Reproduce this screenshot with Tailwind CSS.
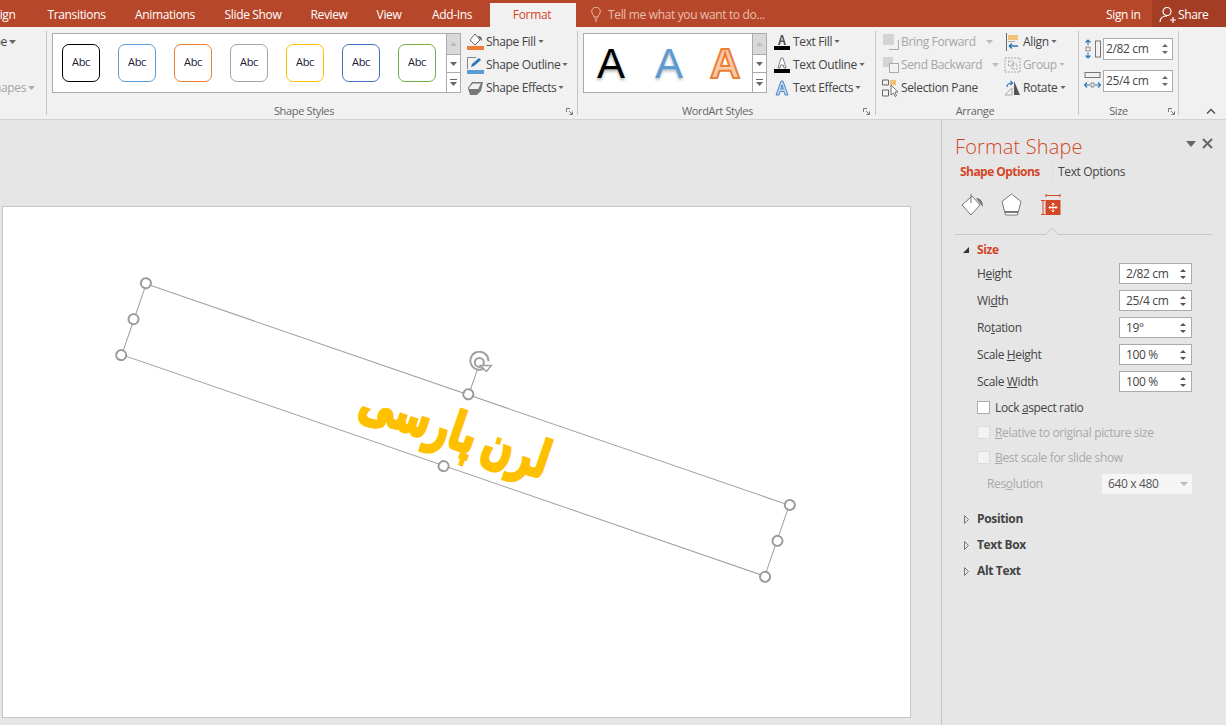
<!DOCTYPE html>
<html lang="en">
<head>
  <meta charset="UTF-8">
  <title>Format Shape</title>
  <script src="https://cdn.jsdelivr.net/npm/@tailwindcss/browser@4"></script>
</head>
<body class="h-screen overflow-hidden flex flex-col bg-[#e6e6e6] text-[12px] text-[#444] font-['Open_Sans',sans-serif] tracking-[-0.35px]">

  <!-- Tabs -->
  <div class="h-[27px] shrink-0 flex bg-[#b7472a] text-white">
    <div class="w-[71px] -ml-[38px] shrink-0 flex items-center justify-center pt-[2px]">Design</div>
    <div class="w-[87px] shrink-0 flex items-center justify-center pt-[2px]">Transitions</div>
    <div class="w-[90px] shrink-0 flex items-center justify-center pt-[2px]">Animations</div>
    <div class="w-[86px] shrink-0 flex items-center justify-center pt-[2px]">Slide Show</div>
    <div class="w-[66px] shrink-0 flex items-center justify-center pt-[2px]">Review</div>
    <div class="w-[54px] shrink-0 flex items-center justify-center pt-[2px]">View</div>
    <div class="w-[74px] shrink-0 flex items-center justify-center pr-[2px] pt-[2px]">Add-Ins</div>
    <div class="w-[86px] shrink-0 mt-[3px] flex items-center justify-center pr-[2px] bg-[#f1f1f1] text-[#d24726]">Format</div>
    <div class="ml-[15px] flex items-center gap-[7px] text-[#e9bfb2] pt-[2px]">
      <svg class="w-[10px] h-[15px]" viewBox="0 0 10 15" fill="none" stroke="#e9bfb2"><path d="M3 10C3 8 .7 7 .7 4.500a4.300 4.300 0 0 1 8.600 0C9.300 7 7 8 7 10z"/><path d="M3.500 12h3M4 14h2"/></svg>
      <span>Tell me what you want to do...</span>
    </div>
    <div class="ml-auto flex">
      <div class="w-[46px] flex items-center pt-[2px]">Sign in</div>
      <div class="w-[74px] bg-[#a33e24] flex items-center pl-[7px] gap-[1px] pt-[2px]">
        <svg class="w-[18px] h-[18px]" viewBox="0 0 18 18" fill="none" stroke="#fff" stroke-width="1.200"><circle cx="8" cy="5.500" r="4"/><path d="M1 16c0-4 3-6 7-6M11 14h6M14 11v6"/></svg>
        <span>Share</span>
      </div>
    </div>
  </div>

  <!-- Ribbon -->
  <div class="h-[93px] shrink-0 flex bg-[#f1f1f1] border-b border-[#d2d2d2]">

    <div class="w-[46px] shrink-0 overflow-hidden flex flex-col">
      <div class="h-[23px] mt-[3px] flex items-center justify-end pr-[30px] gap-[2px] whitespace-nowrap">
        <span>Edit Shape</span>
        <svg class="w-[7px] h-[4px] shrink-0" viewBox="0 0 7 4" fill="#666"><path d="M0 0h7L3.500 4z"/></svg>
      </div>
      <div class="h-[23px] mt-[23px] flex items-center justify-end pr-[11px] gap-[2px] whitespace-nowrap text-[#a6a6a6]">
        <span>Merge Shapes</span>
        <svg class="w-[7px] h-[4px] shrink-0" viewBox="0 0 7 4" fill="#aaa"><path d="M0 0h7L3.500 4z"/></svg>
      </div>
    </div>
    <div class="w-px h-[84px] mt-[4px] bg-[#c6c6c6]"></div>

    <!-- Shape Styles -->
    <div class="w-[530px] shrink-0 flex flex-col">
      <div class="flex">
        <div class="ml-[5px] mt-[6px] w-[409px] h-[60px] flex border border-[#ababab] bg-white">
          <div class="flex-1 flex pl-[9px] gap-[18px] items-center text-[11px] text-[#16203a]">
            <div class="w-[38px] h-[38px] rounded-[7px] border border-black flex items-center justify-center pb-[1px]">Abc</div>
            <div class="w-[38px] h-[38px] rounded-[7px] border border-[#5b9bd5] flex items-center justify-center pb-[1px]">Abc</div>
            <div class="w-[38px] h-[38px] rounded-[7px] border border-[#ed7d31] flex items-center justify-center pb-[1px]">Abc</div>
            <div class="w-[38px] h-[38px] rounded-[7px] border border-[#a5a5a5] flex items-center justify-center pb-[1px]">Abc</div>
            <div class="w-[38px] h-[38px] rounded-[7px] border border-[#ffc000] flex items-center justify-center pb-[1px]">Abc</div>
            <div class="w-[38px] h-[38px] rounded-[7px] border border-[#4472c4] flex items-center justify-center pb-[1px]">Abc</div>
            <div class="w-[38px] h-[38px] rounded-[7px] border border-[#70ad47] flex items-center justify-center pb-[1px]">Abc</div>
          </div>
          <div class="w-[14px] flex flex-col border-l border-[#ababab]">
            <div class="h-[20px] bg-[#d9d9d9] flex items-center justify-center"><svg class="w-[7px] h-[4px]" viewBox="0 0 7 4" fill="#bbb"><path d="M0 4h7L3.500 0z"/></svg></div>
            <div class="h-[19px] bg-white border-y border-[#ababab] flex items-center justify-center"><svg class="w-[7px] h-[4px]" viewBox="0 0 7 4" fill="#666"><path d="M0 0h7L3.500 4z"/></svg></div>
            <div class="flex-1 bg-white flex items-center justify-center"><svg class="w-[7px] h-[7px]" viewBox="0 0 7 7" fill="#666"><path d="M0 0h7v1H0zM0 3h7L3.500 7z"/></svg></div>
          </div>
        </div>
        <div class="ml-[6px] mt-[3px] flex flex-col">
          <div class="h-[23px] flex items-center gap-[2px]">
            <svg class="w-[17px] h-[18px]" viewBox="0 0 17 18"><path d="M8 1l5 6-5 5-5-5z" fill="#fff" stroke="#666"/><path d="M11 3c3 0 4 2 4 5l-2-2z" fill="#555"/><rect y="13" width="17" height="4" fill="#ed7d31"/></svg>
            <span>Shape Fill</span>
            <svg class="w-[6px] h-[3px]" viewBox="0 0 7 4" fill="#666"><path d="M0 0h7L3.500 4z"/></svg>
          </div>
          <div class="h-[23px] flex items-center gap-[2px]">
            <svg class="w-[17px] h-[18px]" viewBox="0 0 17 18"><path d="M.5 13V1.500H9" fill="none" stroke="#888"/><path d="M4 11l1-3 7-6 2 2-7 6z" fill="#2e75b6"/><rect y="14" width="17" height="4" fill="#5b9bd5"/></svg>
            <span>Shape Outline</span>
            <svg class="w-[6px] h-[3px]" viewBox="0 0 7 4" fill="#666"><path d="M0 0h7L3.500 4z"/></svg>
          </div>
          <div class="h-[23px] flex items-center gap-[2px]">
            <svg class="w-[17px] h-[16px]" viewBox="0 0 17 16"><path d="M1 8l4-6h11l-2 9-4 4H3z" fill="#777"/><path d="M1.500 8l4-5h9l-3 6.500H2z" fill="#f2f2f2" stroke="#777"/></svg>
            <span>Shape Effects</span>
            <svg class="w-[6px] h-[3px]" viewBox="0 0 7 4" fill="#666"><path d="M0 0h7L3.500 4z"/></svg>
          </div>
        </div>
      </div>
      <div class="relative mt-auto h-[16px] flex items-center justify-center text-[11px] text-[#666] -translate-x-[8px]">
        <span>Shape Styles</span>
        <svg class="absolute right-[-4px] top-[5px] w-[7px] h-[7px]" viewBox="0 0 7 7" fill="none" stroke="#777"><path d="M.5 4V.5H4M3 3l3 3M6.500 3.500v3h-3"/></svg>
      </div>
    </div>
    <div class="w-px h-[84px] mt-[4px] bg-[#c6c6c6]"></div>

    <!-- WordArt Styles -->
    <div class="w-[297px] shrink-0 flex flex-col">
      <div class="flex">
        <div class="ml-[5px] mt-[6px] w-[184px] h-[60px] flex border border-[#ababab] bg-white">
          <div class="flex-1 flex items-center pl-[13px] text-[42px] font-['Liberation_Sans',sans-serif] tracking-normal">
            <span class="w-[58px] text-black [text-shadow:0_2px_3px_#aaa]">A</span>
            <span class="w-[55px] text-[#5b9bd5] [text-shadow:0_2px_3px_#bbb]">A</span>
            <span class="font-bold text-[#f8cbad] [-webkit-text-stroke:2px_#ed7d31]">A</span>
          </div>
          <div class="w-[14px] flex flex-col border-l border-[#ababab]">
            <div class="h-[20px] bg-[#d9d9d9] flex items-center justify-center"><svg class="w-[7px] h-[4px]" viewBox="0 0 7 4" fill="#bbb"><path d="M0 4h7L3.500 0z"/></svg></div>
            <div class="h-[19px] bg-white border-y border-[#ababab] flex items-center justify-center"><svg class="w-[7px] h-[4px]" viewBox="0 0 7 4" fill="#666"><path d="M0 0h7L3.500 4z"/></svg></div>
            <div class="flex-1 bg-white flex items-center justify-center"><svg class="w-[7px] h-[7px]" viewBox="0 0 7 7" fill="#666"><path d="M0 0h7v1H0zM0 3h7L3.500 7z"/></svg></div>
          </div>
        </div>
        <div class="ml-[6px] mt-[3px] flex flex-col">
          <div class="h-[23px] flex items-center gap-[2px]">
            <svg class="w-[18px] h-[18px]" viewBox="0 0 18 18"><path d="M5 12L8 2h2l3 10h-2l-.7-3H7.700L7 12zM8 7.500h2L9 3.800z" fill="#555"/><rect x="1" y="13" width="16" height="4" fill="#000"/></svg>
            <span>Text Fill</span>
            <svg class="w-[6px] h-[3px]" viewBox="0 0 7 4" fill="#666"><path d="M0 0h7L3.500 4z"/></svg>
          </div>
          <div class="h-[23px] flex items-center gap-[2px]">
            <svg class="w-[18px] h-[18px]" viewBox="0 0 18 18"><path d="M5 12L8 2h2l3 10h-2l-.7-3H7.700L7 12z" fill="#fff" stroke="#666" stroke-width=".8"/><rect x="1" y="13" width="16" height="4" fill="#000"/></svg>
            <span>Text Outline</span>
            <svg class="w-[6px] h-[3px]" viewBox="0 0 7 4" fill="#666"><path d="M0 0h7L3.500 4z"/></svg>
          </div>
          <div class="h-[23px] flex items-center gap-[2px]">
            <svg class="w-[18px] h-[18px]" viewBox="0 0 18 18"><path d="M3 16L8 2h2l5 14h-3l-1-3.500H7L6 16zM7.800 10h2.400L9 6z" fill="#bcd6ee" stroke="#2e75b6" stroke-width=".8"/></svg>
            <span>Text Effects</span>
            <svg class="w-[6px] h-[3px]" viewBox="0 0 7 4" fill="#666"><path d="M0 0h7L3.500 4z"/></svg>
          </div>
        </div>
      </div>
      <div class="relative mt-auto h-[16px] flex items-center justify-center text-[11px] text-[#666] -translate-x-[9px]">
        <span>WordArt Styles</span>
        <svg class="absolute right-[-4px] top-[5px] w-[7px] h-[7px]" viewBox="0 0 7 7" fill="none" stroke="#777"><path d="M.5 4V.5H4M3 3l3 3M6.500 3.500v3h-3"/></svg>
      </div>
    </div>
    <div class="w-px h-[84px] mt-[4px] bg-[#c6c6c6]"></div>

    <!-- Arrange -->
    <div class="w-[202px] shrink-0 flex flex-col">
      <div class="mt-[3px] grid grid-cols-[128px_1fr] auto-rows-[23px]">
        <div class="flex items-center pl-[7px] gap-[2px] text-[#a6a6a6]">
          <svg class="w-[16px] h-[16px] shrink-0" viewBox="0 0 16 16"><rect width="11" height="11" fill="#d4d4d4"/><path d="M15.500 6v9.500H6" fill="none" stroke="#aaa"/></svg>
          <span class="w-[83px]">Bring Forward</span>
          <svg class="w-[7px] h-[4px]" viewBox="0 0 7 4" fill="#bbb"><path d="M0 0h7L3.500 4z"/></svg>
        </div>
        <div class="flex items-center gap-[2px]">
          <svg class="w-[17px] h-[18px] shrink-0" viewBox="0 0 17 18"><path d="M2.500 0v18" stroke="#666"/><rect x="4" y="2" width="10" height="5" fill="#f0c27a"/><rect x="4" y="8" width="7" height="1" fill="#aaa"/><path d="M5 13h9M5 13l3-2.500M5 13l3 2.500" fill="none" stroke="#2e75b6" stroke-width="1.300"/></svg>
          <span>Align</span>
          <svg class="w-[6px] h-[3px]" viewBox="0 0 7 4" fill="#666"><path d="M0 0h7L3.500 4z"/></svg>
        </div>
        <div class="flex items-center pl-[7px] gap-[2px] text-[#a6a6a6]">
          <svg class="w-[16px] h-[16px] shrink-0" viewBox="0 0 16 16"><rect width="10" height="10" fill="#d4d4d4"/><rect x="6.500" y="6.500" width="9" height="9" fill="#f1f1f1" stroke="#aaa"/></svg>
          <span class="w-[89px]">Send Backward</span>
          <svg class="w-[7px] h-[4px]" viewBox="0 0 7 4" fill="#bbb"><path d="M0 0h7L3.500 4z"/></svg>
        </div>
        <div class="flex items-center gap-[2px] text-[#a6a6a6]">
          <svg class="w-[17px] h-[16px] shrink-0" viewBox="0 0 17 16" fill="none" stroke="#aaa" stroke-dasharray="2 1"><rect x="1" y="1" width="15" height="14"/><rect x="4.500" y="4" width="5" height="5"/><rect x="8" y="7" width="5" height="5"/></svg>
          <span>Group</span>
          <svg class="w-[6px] h-[3px]" viewBox="0 0 7 4" fill="#bbb"><path d="M0 0h7L3.500 4z"/></svg>
        </div>
        <div class="flex items-center pl-[6px] gap-[2px]">
          <svg class="w-[17px] h-[18px] shrink-0" viewBox="0 0 17 18"><path d="M.5 1h6v5h-6zM.5 11h6v6h-6z" fill="none" stroke="#666"/><rect x="8" y="1" width="6" height="5" fill="#f0c27a"/><path d="M9 6v10l2.500-2 1.500 3.500 1.500-.7L13 13h3z" fill="#fff" stroke="#555" stroke-width=".8"/></svg>
          <span>Selection Pane</span>
        </div>
        <div class="flex items-center gap-[2px]">
          <svg class="w-[17px] h-[18px] shrink-0" viewBox="0 0 17 18"><path d="M8 16L1 16l7-7z" fill="none" stroke="#aaa"/><path d="M10 2l6 14h-6z" fill="#555"/><path d="M3 8c0-3 2-4 5-4M6.500 2L8.500 4 6.500 6" fill="none" stroke="#2e75b6" stroke-width="1.200"/></svg>
          <span>Rotate</span>
          <svg class="w-[6px] h-[3px]" viewBox="0 0 7 4" fill="#666"><path d="M0 0h7L3.500 4z"/></svg>
        </div>
      </div>
      <div class="mt-auto h-[16px] flex items-center justify-center text-[11px] text-[#666] -translate-x-[2px]">Arrange</div>
    </div>
    <div class="w-px h-[84px] mt-[4px] bg-[#c6c6c6]"></div>

    <!-- Size -->
    <div class="w-[99px] shrink-0 flex flex-col">
      <div class="mt-[11px] flex items-center pl-[5px] gap-[2px]">
        <svg class="w-[17px] h-[20px]" viewBox="0 0 17 20" fill="none"><rect x="11.500" y="2" width="5" height="16" stroke="#777"/><path d="M4 1v5M4 14v5M1.500 3.500L4 1l2.500 2.500M1.500 16.500L4 19l2.500-2.500" stroke="#2e75b6" stroke-width="1.200"/><path d="M2 8h4v4H2z" stroke="#888"/></svg>
        <div class="w-[70px] h-[22px] bg-white border border-[#ababab] flex items-center pl-[2px] pr-[4px] justify-between">
          <span>2/82 cm</span>
          <div class="flex flex-col gap-[4px]">
            <svg class="w-[6px] h-[3px] block" viewBox="0 0 6 3" fill="#666"><path d="M0 3h6L3 0z"/></svg>
            <svg class="w-[6px] h-[3px] block" viewBox="0 0 6 3" fill="#666"><path d="M0 0h6L3 3z"/></svg>
          </div>
        </div>
      </div>
      <div class="mt-[10px] flex items-center pl-[5px] gap-[2px]">
        <svg class="w-[17px] h-[20px]" viewBox="0 0 17 20" fill="none"><rect x="1" y="1.500" width="15" height="5" stroke="#777"/><path d="M1 14h5M11 14h5M3 11.500L.5 14 3 16.500M14 11.500l2.500 2.500-2.500 2.500" stroke="#2e75b6" stroke-width="1.200"/><path d="M7 12h3v4H7z" stroke="#888"/></svg>
        <div class="w-[70px] h-[22px] bg-white border border-[#ababab] flex items-center pl-[2px] pr-[4px] justify-between">
          <span>25/4 cm</span>
          <div class="flex flex-col gap-[4px]">
            <svg class="w-[6px] h-[3px] block" viewBox="0 0 6 3" fill="#666"><path d="M0 3h6L3 0z"/></svg>
            <svg class="w-[6px] h-[3px] block" viewBox="0 0 6 3" fill="#666"><path d="M0 0h6L3 3z"/></svg>
          </div>
        </div>
      </div>
      <div class="relative mt-auto h-[16px] flex items-center justify-center text-[11px] text-[#666] -translate-x-[10px]">
        <span>Size</span>
        <svg class="absolute right-[-7px] top-[5px] w-[7px] h-[7px]" viewBox="0 0 7 7" fill="none" stroke="#777"><path d="M.5 4V.5H4M3 3l3 3M6.500 3.500v3h-3"/></svg>
      </div>
    </div>
    <div class="w-px h-[84px] mt-[4px] bg-[#c6c6c6]"></div>

    <div class="flex-1 flex items-end justify-end pr-[10px] pb-[5px]">
      <svg class="w-[10px] h-[6px]" viewBox="0 0 10 6" fill="none" stroke="#555" stroke-width="1.500"><path d="M1 5.500L5 1.500l4 4"/></svg>
    </div>
  </div>

  <!-- Work area -->
  <div class="flex-1 flex min-h-0">
    <div class="w-[941px] shrink-0 pt-[86px] pl-[2px]">
      <div class="relative w-[909px] h-[512px] bg-white border border-[#c6c6c6]">
        <!-- selected text box, rotated 19deg on the slide -->
        <div class="absolute left-[112px] top-[184.500px] w-[681px] h-[76px] rotate-[19deg] border border-[#a0a0a0] flex items-center justify-center">
          <span dir="rtl" class="text-[#ffc000] font-bold text-[52px] leading-none whitespace-nowrap tracking-normal font-['DejaVu_Sans',sans-serif] scale-x-[0.7] [word-spacing:-6px] [-webkit-text-stroke:3px_#ffc000]">لرن پارسی</span>
          <div class="absolute -left-[7px] -top-[7px] w-[12px] h-[12px] rounded-full bg-white border-2 border-[#9a9a9a]"></div>
          <div class="absolute left-1/2 -ml-[6px] -top-[7px] w-[12px] h-[12px] rounded-full bg-white border-2 border-[#9a9a9a]"></div>
          <div class="absolute -right-[7px] -top-[7px] w-[12px] h-[12px] rounded-full bg-white border-2 border-[#9a9a9a]"></div>
          <div class="absolute -left-[7px] top-1/2 -mt-[6px] w-[12px] h-[12px] rounded-full bg-white border-2 border-[#9a9a9a]"></div>
          <div class="absolute -right-[7px] top-1/2 -mt-[6px] w-[12px] h-[12px] rounded-full bg-white border-2 border-[#9a9a9a]"></div>
          <div class="absolute -left-[7px] -bottom-[7px] w-[12px] h-[12px] rounded-full bg-white border-2 border-[#9a9a9a]"></div>
          <div class="absolute left-1/2 -ml-[6px] -bottom-[7px] w-[12px] h-[12px] rounded-full bg-white border-2 border-[#9a9a9a]"></div>
          <div class="absolute -right-[7px] -bottom-[7px] w-[12px] h-[12px] rounded-full bg-white border-2 border-[#9a9a9a]"></div>
          <div class="absolute left-1/2 -top-[27px] w-px h-[21px] bg-[#9a9a9a]"></div>
          <svg class="absolute left-1/2 -ml-[12px] -top-[47px] w-[26px] h-[24px] -rotate-[19deg]" viewBox="0 0 26 24" fill="none" stroke="#a0a0a0"><path d="M19 16a9 9 0 1 1 2-5" stroke-width="2"/><circle cx="12" cy="12" r="4.500" stroke-width="2"/><path d="M13 15h11l-5 6z" fill="#fff" stroke-width="1.500"/></svg>
        </div>
      </div>
    </div>

    <!-- Format Shape pane -->
    <div class="flex-1 border-l border-[#c6c6c6] pl-[13px] flex flex-col">
      <div class="relative h-[40px] pt-[14px] text-[20px] leading-[26px] font-light text-[#d24726] tracking-[0.15px]">
        Format Shape
        <svg class="absolute right-[30px] top-[21px] w-[10px] h-[6px]" viewBox="0 0 10 6" fill="#666"><path d="M0 0h10L5 6z"/></svg>
        <svg class="absolute right-[13px] top-[18px] w-[11px] h-[11px]" viewBox="0 0 11 11" fill="none" stroke="#666" stroke-width="2"><path d="M1 1l9 9M10 1l-9 9"/></svg>
      </div>
      <div class="h-[24px] flex items-center">
        <span class="ml-[5px] w-[92px] font-bold text-[#d24726] tracking-[-0.55px]">Shape Options</span>
        <span class="w-px h-[16px] bg-[#dcdcdc] mr-[5px]"></span>
        <span>Text Options</span>
      </div>
      <div class="h-[34px] mt-[8px] flex items-start">
        <svg class="ml-[6px] mt-[1px] w-[23px] h-[24px]" viewBox="0 0 23 24"><path d="M1 12L11 3l8 9-9 10z" fill="#fff" stroke="#777"/><path d="M10 1v9" stroke="#777"/><path d="M15 5c5 0 7 4 7 9l-5-6z" fill="#777"/></svg>
        <svg class="ml-[17px] mt-[1px] w-[21px] h-[24px]" viewBox="0 0 21 24"><path d="M10.500 1L20 8.500 16.500 22h-12L1 8.500z" fill="#fff" stroke="#777"/><rect x="4" y="18" width="13" height="2" fill="#777"/></svg>
        <svg class="ml-[18px] mt-[2px] w-[21px] h-[22px]" viewBox="0 0 21 22"><path d="M6 1.500h14M6 0v3M20 0v3M3 6v15M1 6.500h4M1 20.500h4" fill="none" stroke="#d24726"/><rect x="5.500" y="6" width="15" height="15" fill="#d24726"/><path d="M13 9v9M9 13.500h8M11.500 10.500l1.500-1.500 1.500 1.500M11.500 16.500l1.500 1.500 1.500-1.500M10.500 12l-1.500 1.500 1.500 1.500M15.500 12l1.500 1.500-1.500 1.500" fill="none" stroke="#fff"/></svg>
      </div>
      <svg class="w-[257px] h-[9px] block" viewBox="0 0 257 9" fill="none" stroke="#c6c6c6"><path d="M0 8.500h91l6-7 6 7h154"/></svg>

      <div class="h-[20px] mt-[5px] flex items-center">
        <svg class="ml-[8px] w-[6px] h-[6px]" viewBox="0 0 6 6" fill="#333"><path d="M6 0v6H0z"/></svg>
        <span class="ml-[8px] font-bold text-[#d24726]">Size</span>
      </div>

      <div class="mt-[3px] flex flex-col gap-[6px] pl-[22px] pr-[34px]">
        <div class="h-[21px] flex items-center justify-between">
          <span>H<u>e</u>ight</span>
          <div class="w-[73px] h-[21px] bg-white border border-[#ababab] flex items-center justify-between pl-[6px] pr-[5px]">
            <span>2/82 cm</span>
            <div class="flex flex-col gap-[4px]"><svg class="w-[6px] h-[3px] block" viewBox="0 0 6 3" fill="#555"><path d="M0 3h6L3 0z"/></svg><svg class="w-[6px] h-[3px] block" viewBox="0 0 6 3" fill="#555"><path d="M0 0h6L3 3z"/></svg></div>
          </div>
        </div>
        <div class="h-[21px] flex items-center justify-between">
          <span>Wi<u>d</u>th</span>
          <div class="w-[73px] h-[21px] bg-white border border-[#ababab] flex items-center justify-between pl-[6px] pr-[5px]">
            <span>25/4 cm</span>
            <div class="flex flex-col gap-[4px]"><svg class="w-[6px] h-[3px] block" viewBox="0 0 6 3" fill="#555"><path d="M0 3h6L3 0z"/></svg><svg class="w-[6px] h-[3px] block" viewBox="0 0 6 3" fill="#555"><path d="M0 0h6L3 3z"/></svg></div>
          </div>
        </div>
        <div class="h-[21px] flex items-center justify-between">
          <span>Ro<u>t</u>ation</span>
          <div class="w-[73px] h-[21px] bg-white border border-[#ababab] flex items-center justify-between pl-[6px] pr-[5px]">
            <span>19°</span>
            <div class="flex flex-col gap-[4px]"><svg class="w-[6px] h-[3px] block" viewBox="0 0 6 3" fill="#555"><path d="M0 3h6L3 0z"/></svg><svg class="w-[6px] h-[3px] block" viewBox="0 0 6 3" fill="#555"><path d="M0 0h6L3 3z"/></svg></div>
          </div>
        </div>
        <div class="h-[21px] flex items-center justify-between">
          <span>Scale <u>H</u>eight</span>
          <div class="w-[73px] h-[21px] bg-white border border-[#ababab] flex items-center justify-between pl-[6px] pr-[5px]">
            <span>100 %</span>
            <div class="flex flex-col gap-[4px]"><svg class="w-[6px] h-[3px] block" viewBox="0 0 6 3" fill="#555"><path d="M0 3h6L3 0z"/></svg><svg class="w-[6px] h-[3px] block" viewBox="0 0 6 3" fill="#555"><path d="M0 0h6L3 3z"/></svg></div>
          </div>
        </div>
        <div class="h-[21px] flex items-center justify-between">
          <span>Scale <u>W</u>idth</span>
          <div class="w-[73px] h-[21px] bg-white border border-[#ababab] flex items-center justify-between pl-[6px] pr-[5px]">
            <span>100 %</span>
            <div class="flex flex-col gap-[4px]"><svg class="w-[6px] h-[3px] block" viewBox="0 0 6 3" fill="#555"><path d="M0 3h6L3 0z"/></svg><svg class="w-[6px] h-[3px] block" viewBox="0 0 6 3" fill="#555"><path d="M0 0h6L3 3z"/></svg></div>
          </div>
        </div>
      </div>

      <div class="mt-[3px] pl-[22px] flex flex-col">
        <div class="h-[25px] flex items-center gap-[5px]">
          <span class="w-[13px] h-[13px] bg-white border border-[#ababab]"></span>
          <span>Lock <u>a</u>spect ratio</span>
        </div>
        <div class="h-[25px] flex items-center gap-[5px] text-[#a9a9a9]">
          <span class="w-[13px] h-[13px] bg-[#f3f3f3] border border-[#dcdcdc]"></span>
          <span><u>R</u>elative to original picture size</span>
        </div>
        <div class="h-[25px] flex items-center gap-[5px] text-[#a9a9a9]">
          <span class="w-[13px] h-[13px] bg-[#f3f3f3] border border-[#dcdcdc]"></span>
          <span><u>B</u>est scale for slide show</span>
        </div>
      </div>

      <div class="mt-[4px] h-[20px] pl-[32px] pr-[34px] flex items-center justify-between text-[#a9a9a9]">
        <span>Res<u>o</u>lution</span>
        <div class="w-[90px] h-[20px] bg-[#f5f5f5] flex items-center justify-between pl-[6px] pr-[4px] text-[#555]">
          <span>640 x 480</span>
          <svg class="w-[8px] h-[4px]" viewBox="0 0 8 4" fill="#bbb"><path d="M0 0h8L4 4z"/></svg>
        </div>
      </div>

      <div class="mt-[12px] flex flex-col font-bold">
        <div class="h-[26px] flex items-center">
          <svg class="ml-[9px] w-[5px] h-[9px]" viewBox="0 0 5 9" fill="none" stroke="#777"><path d="M.5 .5l4 4-4 4z"/></svg>
          <span class="ml-[8px]">Position</span>
        </div>
        <div class="h-[26px] flex items-center">
          <svg class="ml-[9px] w-[5px] h-[9px]" viewBox="0 0 5 9" fill="none" stroke="#777"><path d="M.5 .5l4 4-4 4z"/></svg>
          <span class="ml-[8px]">Text Box</span>
        </div>
        <div class="h-[26px] flex items-center">
          <svg class="ml-[9px] w-[5px] h-[9px]" viewBox="0 0 5 9" fill="none" stroke="#777"><path d="M.5 .5l4 4-4 4z"/></svg>
          <span class="ml-[8px]">Alt Text</span>
        </div>
      </div>
    </div>
  </div>
</body>
</html>
